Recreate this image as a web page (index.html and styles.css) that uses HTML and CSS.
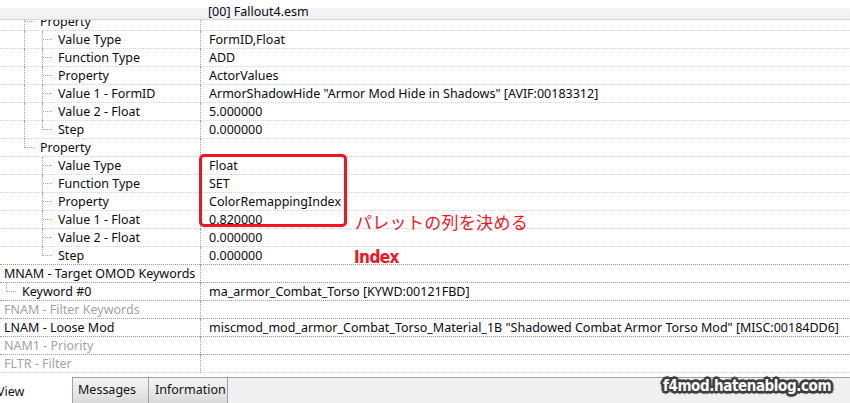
FILE: index.html
```html
<!DOCTYPE html>
<html>
<head>
<meta charset="utf-8">
<link rel="stylesheet" href="styles.css">
</head>
<body>
<div class="app">
  <div class="hdr">
    <div class="hcell"></div>
    <div class="hcell hval">[00] Fallout4.esm</div>
  </div>
  <div class="view">
    <div class="list">
      <div class="row"><div class="k"><span class="g"></span><span class="g tee"></span><span>Property</span></div><div class="v"></div></div>
      <div class="row"><div class="k"><span class="g"></span><span class="g pipe"></span><span class="g tee"></span><span>Value Type</span></div><div class="v">FormID,Float</div></div>
      <div class="row"><div class="k"><span class="g"></span><span class="g pipe"></span><span class="g tee"></span><span>Function Type</span></div><div class="v">ADD</div></div>
      <div class="row"><div class="k"><span class="g"></span><span class="g pipe"></span><span class="g tee"></span><span>Property</span></div><div class="v">ActorValues</div></div>
      <div class="row"><div class="k"><span class="g"></span><span class="g pipe"></span><span class="g tee"></span><span>Value 1 - FormID</span></div><div class="v">ArmorShadowHide "Armor Mod Hide in Shadows" [AVIF:00183312]</div></div>
      <div class="row"><div class="k"><span class="g"></span><span class="g pipe"></span><span class="g tee"></span><span>Value 2 - Float</span></div><div class="v">5.000000</div></div>
      <div class="row"><div class="k"><span class="g"></span><span class="g pipe"></span><span class="g ell"></span><span>Step</span></div><div class="v">0.000000</div></div>
      <div class="row"><div class="k"><span class="g"></span><span class="g ell"></span><span>Property</span></div><div class="v"></div></div>
      <div class="row"><div class="k"><span class="g"></span><span class="g"></span><span class="g tee"></span><span>Value Type</span></div><div class="v">Float</div></div>
      <div class="row"><div class="k"><span class="g"></span><span class="g"></span><span class="g tee"></span><span>Function Type</span></div><div class="v">SET</div></div>
      <div class="row"><div class="k"><span class="g"></span><span class="g"></span><span class="g tee"></span><span>Property</span></div><div class="v">ColorRemappingIndex</div></div>
      <div class="row"><div class="k"><span class="g"></span><span class="g"></span><span class="g tee"></span><span>Value 1 - Float</span></div><div class="v">0.820000</div></div>
      <div class="row"><div class="k"><span class="g"></span><span class="g"></span><span class="g tee"></span><span>Value 2 - Float</span></div><div class="v">0.000000</div></div>
      <div class="row dark"><div class="k"><span class="g"></span><span class="g"></span><span class="g ell"></span><span>Step</span></div><div class="v">0.000000</div></div>
      <div class="row dark"><div class="k"><span>MNAM - Target OMOD Keywords</span></div><div class="v"></div></div>
      <div class="row dark"><div class="k"><span class="g ell"></span><span>Keyword #0</span></div><div class="v">ma_armor_Combat_Torso [KYWD:00121FBD]</div></div>
      <div class="row dark muted"><div class="k"><span>FNAM - Filter Keywords</span></div><div class="v"></div></div>
      <div class="row dark"><div class="k"><span>LNAM - Loose Mod</span></div><div class="v">miscmod_mod_armor_Combat_Torso_Material_1B "Shadowed Combat Armor Torso Mod" [MISC:00184DD6]</div></div>
      <div class="row dark muted"><div class="k"><span>NAM1 - Priority</span></div><div class="v"></div></div>
      <div class="row muted"><div class="k"><span>FLTR - Filter</span></div><div class="v"></div></div>
    </div>
    <div class="redbox"></div>
    <div class="note">パレットの列を決める</div>
    <div class="note2">Index</div>
  </div>
  <div class="tabs">
    <div class="tab active">View</div>
    <div class="tab first">Messages</div>
    <div class="tab">Information</div>
    <div class="fill"></div>
    <div class="wm">f4mod.hatenablog.com</div>
  </div>
</div>
</body>
</html>
```
FILE: styles.css
```css
* { box-sizing: border-box; }
html, body { margin: 0; padding: 0; background: #fff; }
.app {
  width: 850px;
  height: 403px;
  display: flex;
  flex-direction: column;
  overflow: hidden;
  font-family: "Noto Sans", "Noto Sans CJK JP", sans-serif;
  font-size: 12.5px;
  color: #0a0a10;
}
.hdr {
  height: 20px;
  flex: none;
  display: flex;
  background: linear-gradient(#ffffff 0, #ffffff 8px, #f4f5f7 8px, #eef0f2 19px);
  border-bottom: 1px solid #d5d6d8;
  position: relative;
  z-index: 2;
}
.hcell { width: 201px; flex: none; }
.hval {
  flex: 1;
  padding-left: 7px;
  line-height: 19px;
  margin-top: 2px;
}
.view {
  flex: 1;
  position: relative;
  overflow: hidden;
}
.list { margin-top: -7px; }
.row {
  height: 18px;
  display: flex;
  border-bottom: 1px dotted #d4d4d4;
  white-space: nowrap;
}
.row.dark { border-bottom-color: #9a9a9a; }
.row.muted { color: #a3a3a3; }
.k {
  width: 201px;
  flex: none;
  display: flex;
  align-items: flex-start;
  padding-left: 4px;
  border-right: 1px dotted #a0a0a0;
  margin-bottom: -1px;
  line-height: 16px;
}
.k > span:last-child { padding-top: 1px; }
.v {
  flex: 1;
  padding-left: 8px;
  padding-top: 1px;
  line-height: 16px;
  overflow: hidden;
}
.g {
  width: 18px;
  height: 18px;
  flex: none;
  position: relative;
}
.g.pipe::before, .g.tee::before, .g.ell::before {
  content: "";
  position: absolute;
  left: 2px;
  top: 0;
  height: 18px;
  border-left: 1px dotted #a0a0a0;
}
.g.ell::before { height: 9px; }
.g.tee::after, .g.ell::after {
  content: "";
  position: absolute;
  left: 3px;
  top: 8px;
  width: 9px;
  border-top: 1px dotted #a0a0a0;
}
.redbox {
  position: absolute;
  left: 199px;
  top: 134px;
  width: 148px;
  height: 73px;
  border: 3px solid #f2141e;
  border-radius: 5px;
}
.note {
  position: absolute;
  left: 355px;
  top: 190px;
  font-family: "Noto Sans CJK JP", sans-serif;
  font-size: 17px;
  line-height: 24px;
  color: #f2141e;
  letter-spacing: 0.3px;
}
.note2 {
  position: absolute;
  left: 354px;
  top: 227px;
  font-family: "DejaVu Sans Condensed", "DejaVu Sans", sans-serif;
  font-weight: bold;
  font-size: 17px;
  line-height: 20px;
  color: #f2141e;
  letter-spacing: -0.6px;
}
.tabs {
  height: 26px;
  flex: none;
  display: flex;
  background: #f0f0f0;
  position: relative;
}
.tab {
  height: 26px;
  padding: 3px 0 0 5px;
  line-height: 18px;
  border-top: 1px solid #a0a0a0;
  border-right: 1px solid #a0a0a0;
  background: linear-gradient(#f4f4f4, #e6e6e6 60%, #d8d8d8);
  color: #111;
}
.tab.first { width: 77px; border-left: 1px solid #a0a0a0; }
.tab.first + .tab { width: 79px; padding-left: 6px; }
.tab.active {
  width: 72px;
  background: #fff;
  border: none;
  padding: 6px 0 0 0;
  text-indent: -3px;
}
.fill {
  flex: 1;
  border-top: 1px solid #a0a0a0;
}
.wm {
  position: absolute;
  left: 663px;
  top: 0px;
  font-family: "DejaVu Sans Condensed", "DejaVu Sans", sans-serif;
  font-weight: bold;
  font-size: 15px;
  line-height: 19px;
  letter-spacing: -0.4px;
  color: #fff;
  text-shadow:
    2px 0 0 #3e3e3e, -2px 0 0 #3e3e3e, 0 2px 0 #3e3e3e, 0 -2px 0 #3e3e3e,
    2px 2px 0 #3e3e3e, -2px -2px 0 #3e3e3e, 2px -2px 0 #3e3e3e, -2px 2px 0 #3e3e3e,
    3px 0 1px #555, -3px 0 1px #555, 0 3px 1px #555, 0 -3px 1px #555;
}
```
